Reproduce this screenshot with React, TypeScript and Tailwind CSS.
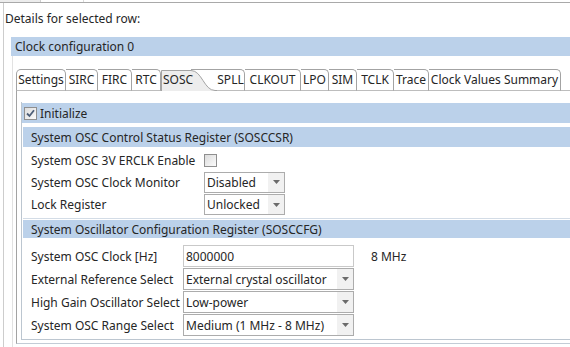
import React from "react";

const tabs = [
  { label: "Settings", w: "w-[50px] border-l rounded-tl-[5px]" },
  { label: "SIRC", w: "w-[32px]" },
  { label: "FIRC", w: "w-[34px]" },
  { label: "RTC", w: "w-[29px]" },
  { label: "SOSC", w: "", selected: true },
  { label: "SPLL", w: "w-[28px]" },
  { label: "CLKOUT", w: "w-[56px]" },
  { label: "LPO", w: "w-[28px]" },
  { label: "SIM", w: "w-[28px]" },
  { label: "TCLK", w: "w-[37px]" },
  { label: "Trace", w: "w-[35px]" },
  { label: "Clock Values Summary", w: "w-[132px]" },
];

function Arrow() {
  return (
    <svg width="7" height="4" viewBox="0 0 7 4" aria-hidden>
      <path d="M0 0H7L3.5 4Z" fill="#6b6b6b" />
    </svg>
  );
}

function Combo({ value, className }: { value: string; className: string }) {
  return (
    <div className={`flex border border-[#acacac] bg-white ${className}`}>
      <span className="flex flex-1 items-center overflow-hidden whitespace-nowrap pl-[2px] pt-[1px]">{value}</span>
      <span className="flex w-[16px] items-center justify-center bg-[#f1f1f1]">
        <Arrow />
      </span>
    </div>
  );
}

function CheckBox({ checked }: { checked?: boolean }) {
  return (
    <span className="flex h-[13px] w-[13px] shrink-0 items-center justify-center border border-[#8f8f8f] bg-gradient-to-br from-[#dcdcdc] to-[#fbfbfb]">
      {checked && (
        <svg width="9" height="9" viewBox="0 0 9 9" aria-hidden>
          <path d="M1 4.5L3.5 7L8 1.2" fill="none" stroke="#4d5e78" strokeWidth="1.8" />
        </svg>
      )}
    </span>
  );
}

function SectionBar({ title, className }: { title: string; className: string }) {
  return (
    <div className={`ml-[1px] flex shrink-0 items-center bg-[#bbd1ea] pl-[8px] pt-[1px] ${className}`}>{title}</div>
  );
}

function Row({ children }: { children: React.ReactNode }) {
  return <div className="flex h-[22px] items-center pt-[1px]">{children}</div>;
}

export default function App() {
  return (
    <div className="relative flex h-[347px] w-[570px] flex-col overflow-hidden bg-white font-['Noto_Sans',sans-serif] text-[12px] leading-[16px] text-[#262626]">
      {/* bottom edge of the view tabs above */}
      <div className="flex h-[2px] shrink-0">
        <div className="w-[41px] border-r border-[#cfcfcf] bg-[#ececec]" />
        <div className="w-[43px] border-r border-[#dadada]" />
      </div>
      <div className="h-[1px] w-[620px] shrink-0 bg-[#a9a9a9]" />

      <div className="ml-[3px] flex h-[344px] w-[620px] flex-col border-l border-[#cdcdcd] pt-[8px]">
        <p className="pl-[1px]">Details for selected row:</p>

        <div className="ml-[7px] mt-[10px] flex flex-col">
          <div className="flex h-[19px] items-center bg-[#bbd1ea] pl-[4px] pt-[1px]">Clock configuration 0</div>

          <div className="ml-[1px] flex h-[300px] flex-col border-l border-[#e2e2e2] pt-[13px] pl-[3px]">
            {/* tab folder */}
            <div className="flex h-[22px] shrink-0">
              {tabs.map((t) =>
                t.selected ? (
                  <div key={t.label} className="relative flex h-[22px] w-[56px] shrink-0 items-center pl-[2px]">
                    <svg className="absolute inset-0" width="56" height="22" viewBox="0 0 56 22" aria-hidden>
                      <path d="M0.5 22V1.5H30C41 1.5 43 21.5 54 21.5H56V22Z" fill="#ededed" />
                      <path d="M0.5 22V1.5H30C41 1.5 43 21.5 54 21.5H56" fill="none" stroke="#a3a3a3" />
                      <path d="M30 0.5H56" stroke="#a3a3a3" />
                    </svg>
                    <span className="relative">{t.label}</span>
                  </div>
                ) : (
                  <div
                    key={t.label}
                    className={`flex h-[22px] shrink-0 items-center justify-center whitespace-nowrap rounded-tr-[5px] border-t border-r border-b border-t-[#a3a3a3] border-r-[#a3a3a3] border-l-[#a3a3a3] border-b-[#bdbdbd] ${t.w}`}
                  >
                    {t.label}
                  </div>
                )
              )}
              <div className="flex-1 border-b border-[#bdbdbd]" />
            </div>

            <div className="flex h-[253px] shrink-0 flex-col border-l border-b border-[#a3a3a3] border-b-[#c3ccd6] pl-[4px] pt-[11px]">
              <div className="flex h-[238px] flex-col border-l border-b border-[#bcc6d0] pt-[1px]">
                <div className="flex h-[20px] shrink-0 items-center gap-[3px] bg-[#bbd1ea] pl-[2px]">
                  <CheckBox checked />
                  <span className="pt-[1px]">Initialize</span>
                </div>

                <SectionBar className="mt-[4px] h-[20px]" title="System OSC Control Status Register (SOSCCSR)" />
                <div className="ml-[1px] mt-[2px] grid grid-cols-[173px_1fr] pl-[8px]">
                  <Row>System OSC 3V ERCLK Enable</Row>
                  <div className="flex h-[22px] items-center pt-[1px]">
                    <CheckBox />
                  </div>
                  <Row>System OSC Clock Monitor</Row>
                  <div className="flex h-[22px] items-center">
                    <Combo className="h-[21px] w-[81px]" value="Disabled" />
                  </div>
                  <Row>Lock Register</Row>
                  <div className="flex h-[22px] items-center pt-[1px]">
                    <Combo className="h-[21px] w-[81px]" value="Unlocked" />
                  </div>
                </div>

                <div className="ml-[1px] mt-[3px] h-[1px] shrink-0 bg-[#d3dce6]" />
                <SectionBar className="mt-[1px] h-[18px]" title="System Oscillator Configuration Register (SOSCCFG)" />
                <div className="ml-[1px] mt-[7px] grid grid-cols-[152px_171px_1fr] gap-y-[1px] pl-[8px]">
                  <Row>System OSC Clock [Hz]</Row>
                  <div className="flex h-[22px] items-center border border-[#c9c9c9] pl-[2px] pt-[1px]">8000000</div>
                  <div className="flex h-[22px] items-center pl-[17px] pt-[1px]">8 MHz</div>

                  <Row>External Reference Select</Row>
                  <Combo className="h-[22px]" value="External crystal oscillator" />
                  <div />

                  <Row>High Gain Oscillator Select</Row>
                  <Combo className="h-[22px]" value="Low-power" />
                  <div />

                  <Row>System OSC Range Select</Row>
                  <Combo className="h-[22px]" value="Medium (1 MHz - 8 MHz)" />
                  <div />
                </div>
              </div>
            </div>
          </div>
        </div>
      </div>
    </div>
  );
}
